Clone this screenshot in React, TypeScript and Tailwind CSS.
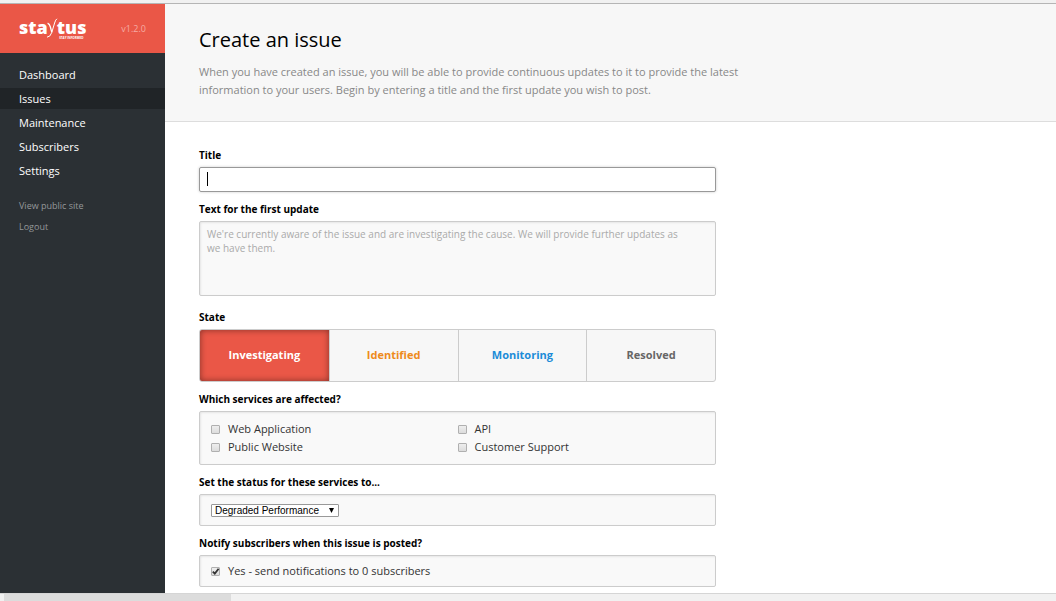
import type { ReactNode } from "react";

const navItems = ["Dashboard", "Issues", "Maintenance", "Subscribers", "Settings"];

const states = [
  { name: "Investigating", style: "rounded-l-[2px] bg-[#ea5747] text-white shadow-[inset_0_0_6px_rgba(0,0,0,0.45)]" },
  { name: "Identified", style: "border-l border-[#ccc] text-[#ee8b1c]" },
  { name: "Monitoring", style: "border-l border-[#ccc] text-[#1c8cd8]" },
  { name: "Resolved", style: "border-l border-[#ccc] text-[#666]" },
];

const services = ["Web Application", "API", "Public Website", "Customer Support"];

const labelStyle = "mb-[5px] block h-[14px] text-[10px] leading-[14px] font-bold text-black";
const panelStyle =
  "rounded-[2px] border border-[#ccc] bg-[#f9f9f9] px-[11px] shadow-[inset_1px_1px_2px_rgba(0,0,0,0.08)]";

function Logo() {
  return (
    <a href="#" aria-label="Staytus" className="flex flex-col items-end text-white">
      <span className="flex h-[18px] items-center text-[18px] leading-[18px] font-extrabold">
        <span>sta</span>
        <svg viewBox="0 0 12 20" className="mt-[3px] -mr-px -ml-[2px] h-[20px] w-[12px]" fill="none" stroke="currentColor">
          <path d="M1.6 5.2 Q3.6 6 4.4 9 L5.8 14.4" strokeWidth="1.3" />
          <path d="M11 0.8 Q9.6 1.4 8.6 5 L5.8 14.4 Q4.4 19 1 19.2" strokeWidth="1" />
        </svg>
        <span>tus</span>
      </span>
      <span className="mr-[3px] text-[3px] leading-[4px] font-bold">STAY INFORMED</span>
    </a>
  );
}

function Check({ label, checked }: { label: string; checked?: boolean }) {
  return (
    <label className="flex h-[18px] items-center gap-2 text-[11px] leading-[18px] text-[#333]">
      <span className="relative flex size-[9px]">
        <input
          type="checkbox"
          defaultChecked={checked}
          className="peer size-[9px] appearance-none rounded-[1px] border border-[#b0b0b0] bg-linear-to-b from-[#eee] to-[#dcdcdc]"
        />
        <svg
          viewBox="0 0 9 9"
          className="pointer-events-none absolute inset-0 hidden size-[9px] peer-checked:block"
          fill="none"
          stroke="#333"
          strokeWidth="1.8"
        >
          <path d="M1.8 4.6 L3.8 6.6 L7.6 1.8" />
        </svg>
      </span>
      {label}
    </label>
  );
}

function Group({ title, children }: { title: string; children: ReactNode }) {
  return (
    <fieldset>
      <legend className={labelStyle}>{title}</legend>
      {children}
    </fieldset>
  );
}

export default function App() {
  return (
    <div className="flex h-screen flex-col overflow-hidden bg-white font-['Open_Sans',sans-serif]">
      <div className="h-1 shrink-0 border-b border-[#b5b5b5] bg-[#f1f1f1]" />
      <div className="flex min-h-0 flex-1">
        <aside className="w-[165px] shrink-0 bg-[#2b3034]">
          <div className="flex h-[49px] items-center justify-between bg-[#ea5747] px-[19px]">
            <Logo />
            <span className="text-[9px] text-[#f5aba3]">v1.2.0</span>
          </div>
          <nav className="flex flex-col gap-[3px] pt-[11px]">
            {navItems.map((item) => (
              <a
                key={item}
                href="#"
                className={
                  item === "Issues"
                    ? "block bg-[#202427] pl-[19px] text-[11px] leading-[21px] text-white"
                    : "block pl-[19px] text-[11px] leading-[21px] text-white"
                }
              >
                {item}
              </a>
            ))}
          </nav>
          <div className="flex flex-col pt-[14px] pl-[19px] text-[9px] leading-[21px] text-[#95989a]">
            <a href="#">View public site</a>
            <a href="#">Logout</a>
          </div>
        </aside>
        <main className="min-w-0 flex-1 overflow-hidden">
          <header className="border-b border-[#ddd] bg-[#f7f7f7] px-[34px] pt-[22px] pb-[22px]">
            <h1 className="text-[20px] leading-[28px] text-black">Create an issue</h1>
            <p className="mt-[9px] max-w-[560px] text-[11px] leading-[18px] text-[#888]">
              When you have created an issue, you will be able to provide continuous updates to it to provide the latest
              information to your users. Begin by entering a title and the first update you wish to post.
            </p>
          </header>
          <form className="flex max-w-[585px] flex-col gap-[10px] px-[34px] pt-[26px]">
            <div>
              <label htmlFor="title" className={labelStyle}>
                Title
              </label>
              <div className="relative">
                <input
                  id="title"
                  type="text"
                  className="block h-[25px] w-full rounded-[2px] border border-[#999] bg-white px-[7px] text-[11px] shadow-[0_0_3px_rgba(0,0,0,0.2)] outline-none"
                />
                <span aria-hidden="true" className="pointer-events-none absolute top-[5px] left-2 h-[14px] w-px bg-black" />
              </div>
            </div>
            <div className="pb-1">
              <label htmlFor="update" className={labelStyle}>
                Text for the first update
              </label>
              <textarea
                id="update"
                placeholder="We're currently aware of the issue and are investigating the cause. We will provide further updates as we have them."
                className="block h-[75px] w-full resize-none rounded-[2px] border border-[#ccc] bg-[#f9f9f9] py-[5px] pr-[24px] pl-[7px] text-[10px] leading-[14px] shadow-[inset_1px_1px_2px_rgba(0,0,0,0.08)] outline-none placeholder:text-[#aaa]"
              />
            </div>
            <Group title="State">
              <div className="grid h-[53px] grid-cols-4 rounded-[3px] border border-[#ccc] bg-[#f7f7f7]">
                {states.map((s) => (
                  <button key={s.name} type="button" className={`text-[11px] font-bold ${s.style}`}>
                    {s.name}
                  </button>
                ))}
              </div>
            </Group>
            <Group title="Which services are affected?">
              <div className={`${panelStyle} grid grid-cols-2 py-[8px]`}>
                {services.map((s) => (
                  <Check key={s} label={s} />
                ))}
              </div>
            </Group>
            <div>
              <label htmlFor="status" className={labelStyle}>
                Set the status for these services to...
              </label>
              <div className={`${panelStyle} flex h-[32px] items-center`}>
                <div className="relative flex">
                  <select
                    id="status"
                    className="h-[13px] w-[128px] appearance-none rounded-[1px] border border-[#999] bg-white pl-[3px] font-['Liberation_Sans',sans-serif] text-[10px] leading-[11px] text-black"
                  >
                    <option>Degraded Performance</option>
                  </select>
                  <svg viewBox="0 0 5 5" className="pointer-events-none absolute top-[4px] right-[5px] size-[5px]">
                    <path d="M0 0 H5 L2.5 5 Z" />
                  </svg>
                </div>
              </div>
            </div>
            <Group title="Notify subscribers when this issue is posted?">
              <div className={`${panelStyle} flex h-[32px] items-center`}>
                <Check label="Yes - send notifications to 0 subscribers" checked />
              </div>
            </Group>
          </form>
        </main>
      </div>
      <div className="flex h-2 shrink-0 border-t border-[#d5d5d5] bg-[#f1f1f1] pl-1">
        <div className="w-[227px] bg-[#dcdcdc]" />
      </div>
    </div>
  );
}
